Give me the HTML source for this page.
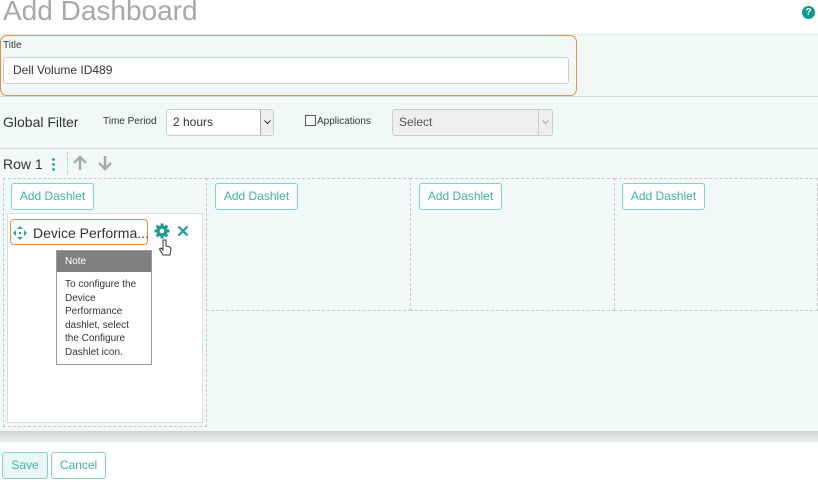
<!DOCTYPE html><html><head><style>
body{margin:0;width:818px;height:482px;background:#fff;font-family:"Liberation Sans",sans-serif;position:relative;overflow:hidden}
.a{position:absolute}
.btn{position:absolute;border:1px solid #7fd3cb;border-radius:3px;color:#3fb3a8;font-size:12px;background:#fff;text-align:center;box-sizing:border-box}
.cell{position:absolute;border:1px dashed #c8c8c8;box-sizing:border-box}
</style></head><body>
<div class="a" style="left:3px;top:-5px;font-size:28px;color:#a8a8a8;">Add Dashboard</div>
<div class="a" style="left:802px;top:6px;width:13px;height:13px;border-radius:50%;background:#11998e;color:#fff;font-size:10px;font-weight:bold;text-align:center;line-height:13px">?</div>
<div class="a" style="left:0;top:34px;width:818px;height:398px;background:#f1f9f8;border-top:1px solid #e3eceb"></div>
<div class="a" style="left:0;top:35px;width:575px;height:59px;border:1px solid #ef8c45;border-radius:7px"></div>
<div class="a" style="left:3px;top:40px;font-size:10px;color:#333">Title</div>
<div class="a" style="left:3px;top:57px;width:566px;height:27px;background:#fff;border:1px solid #ccc;border-radius:3px;font-size:12px;color:#333;line-height:25px;padding-left:9px;box-sizing:border-box">Dell Volume ID489</div>
<div class="a" style="left:0;top:96px;width:818px;height:1px;background:#d5d9d9"></div>
<div class="a" style="left:3px;top:114px;font-size:14px;color:#333">Global Filter</div>
<div class="a" style="left:103px;top:116px;font-size:10px;color:#333">Time Period</div>
<div class="a" style="left:166px;top:109px;width:108px;height:27px;background:#fff;border:1px solid #ccc;border-radius:3px;box-sizing:border-box;font-size:12px;color:#333;line-height:25px;padding-left:6px">2 hours<div class="a" style="right:0;top:0;width:12px;height:25px;border-left:1px solid #aaa;background:#eee"><svg class="a" style="left:3px;top:10px" width="7" height="5"><path d="M0.5 0.5l3 3 3-3" stroke="#333" fill="none"/></svg></div></div>
<div class="a" style="left:305px;top:115px;width:9px;height:9px;border:1px solid #555;background:#fff"></div>
<div class="a" style="left:317px;top:116px;font-size:10px;color:#333">Applications</div>
<div class="a" style="left:392px;top:109px;width:161px;height:27px;background:#eee;border:1px solid #ccc;border-radius:3px;box-sizing:border-box;font-size:12px;color:#555;line-height:25px;padding-left:6px">Select<div class="a" style="right:0;top:0;width:13px;height:25px;border-left:1px solid #ccc"><svg class="a" style="left:3px;top:10px" width="7" height="5"><path d="M0.5 0.5l3 3 3-3" stroke="#aaa" fill="none"/></svg></div></div>
<div class="a" style="left:0;top:148px;width:818px;height:1px;background:#d5d9d9"></div>
<div class="a" style="left:3px;top:156px;font-size:14px;color:#333">Row 1</div>
<div class="a" style="left:52px;top:157px;width:3px;height:14px;background:radial-gradient(circle,#27a89c 1.3px,transparent 1.5px) 0 0/3px 5px"></div>
<div class="a" style="left:67px;top:152px;height:22px;border-left:1px dotted #bbb"></div>
<svg class="a" style="left:72px;top:155px" width="40" height="16"><g stroke="#a8a8a8" stroke-width="2.5" fill="none"><path d="M8 15V2M2 8l6-6 6 6"/><path d="M33 1v13M27 8l6 6 6-6"/></g></svg>
<div class="cell" style="left:3px;top:178px;width:204px;height:249px"></div>
<div class="cell" style="left:206px;top:178px;width:205px;height:133px"></div>
<div class="cell" style="left:410px;top:178px;width:205px;height:133px"></div>
<div class="cell" style="left:614px;top:178px;width:204px;height:133px"></div>
<div class="btn" style="left:11px;top:183px;width:83px;height:27px;line-height:25px">Add Dashlet</div>
<div class="btn" style="left:215px;top:183px;width:83px;height:27px;line-height:25px">Add Dashlet</div>
<div class="btn" style="left:419px;top:183px;width:83px;height:27px;line-height:25px">Add Dashlet</div>
<div class="btn" style="left:622px;top:183px;width:83px;height:27px;line-height:25px">Add Dashlet</div>
<div class="a" style="left:7px;top:213px;width:194px;height:208px;background:#fff;border:1px solid #ddd"></div>
<div class="a" style="left:10px;top:219px;width:138px;height:26px;border:1px solid #ef8c45;border-radius:4px;background:#fff;box-sizing:border-box"></div>
<svg class="a" style="left:12px;top:225px" width="16" height="16"><g fill="#27a89c"><path d="M8 1l3 3H5zM8 15l-3-3h6zM1 8l3-3v6zM15 8l-3 3V5z"/><rect x="7" y="7" width="2" height="2"/></g></svg>
<div class="a" style="left:33px;top:225px;font-size:14px;color:#333">Device Performa...</div>
<svg class="a" style="left:154px;top:223px" width="16" height="16" viewBox="0 0 16 16"><g fill="#1b9d90"><circle cx="8" cy="8" r="5.5"/><g stroke="#1b9d90" stroke-width="3"><path d="M8 0.5v15M0.5 8h15M2.7 2.7l10.6 10.6M13.3 2.7L2.7 13.3"/></g></g><circle cx="8" cy="8" r="2.3" fill="#fff"/></svg>
<svg class="a" style="left:177px;top:225px" width="12" height="12"><path d="M1.5 1.5l9 9M10.5 1.5l-9 9" stroke="#1b9d90" stroke-width="2.2"/></svg>
<svg class="a" style="left:158px;top:238px" width="14" height="20"><path d="M5 2v10l-2-2-1.5 1 3.5 6h7l1-6-1-2-4-1V2z" fill="#fff" stroke="#333" stroke-width="1"/></svg>
<div class="a" style="left:56px;top:250px;width:96px;height:115px;background:#fff;border:1px solid #999;box-sizing:border-box">
<div style="background:#808080;color:#fff;font-size:10px;height:21px;line-height:21px;padding-left:8px">Note</div>
<div style="font-size:10px;color:#333;line-height:13.5px;padding:6px 14px 0 8px">To configure the Device Performance dashlet, select the Configure Dashlet icon.</div></div>
<div class="a" style="left:0;top:431px;width:818px;height:11px;background:linear-gradient(#cfd3d3,#eef0f0)"></div>
<div class="btn" style="left:2px;top:452px;width:46px;height:27px;line-height:25px;background:#eaf6f5">Save</div>
<div class="btn" style="left:51px;top:452px;width:55px;height:27px;line-height:25px">Cancel</div>
</body></html>
